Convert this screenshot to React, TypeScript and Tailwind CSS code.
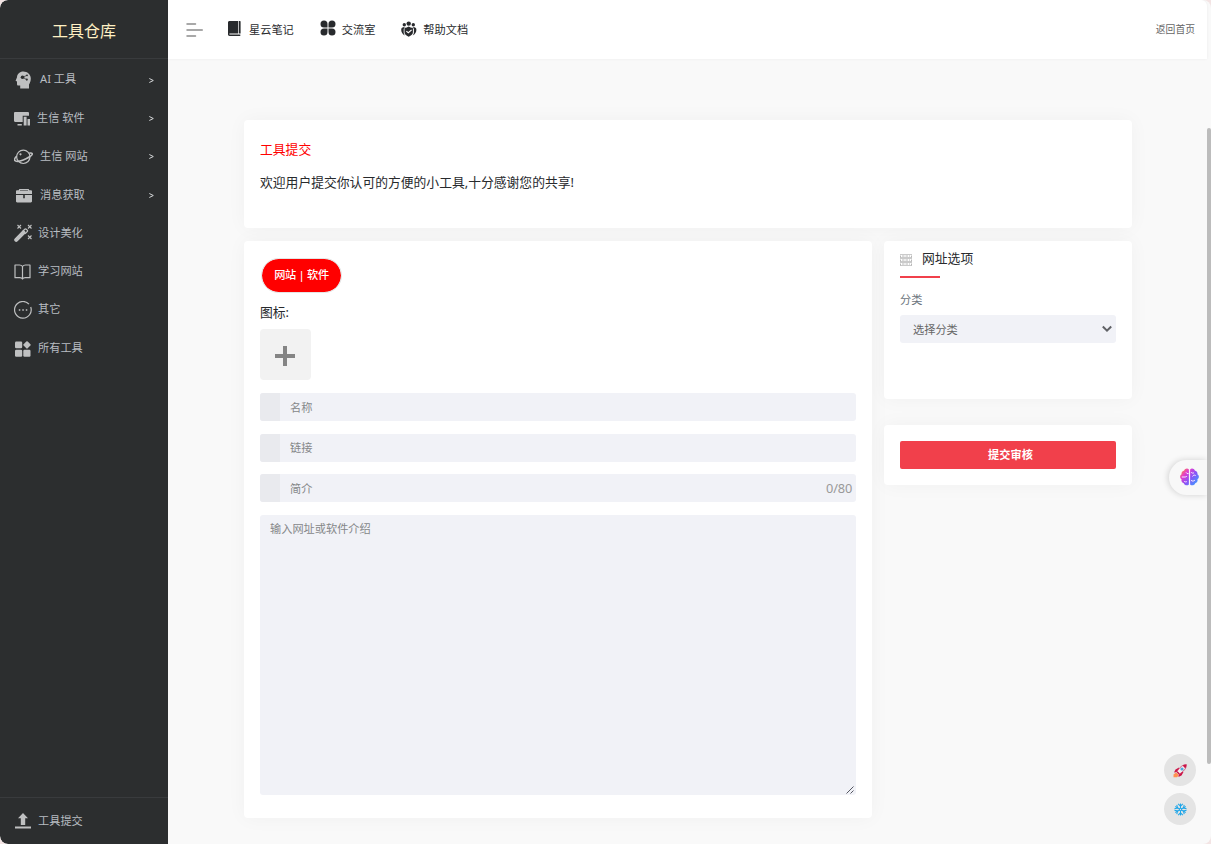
import React from 'react';

type IconProps = { className?: string };

const HeadIcon = ({ className }: IconProps) => (
  <svg viewBox="0 0 17 18" className={className} fill="currentColor">
    <path d="M8.3.5C4.8.5 2.1 3 2 6.200L.7 9.400c-.2.500 0 .8.500.900H2v3c0 .8.500 1.300 1.300 1.300h1.900v2.900h8.800v-4c1.100-1.600 1.800-3.600 1.800-6C15.800 3.300 12.200.500 8.300.500Z" />
    <g fill="#2c2e2f" stroke="#2c2e2f" strokeWidth=".7">
      <circle cx="7.500" cy="6.300" r="1.800" stroke="none" />
      <circle cx="12" cy="4.300" r=".9" stroke="none" />
      <circle cx="11.800" cy="8.600" r="1.100" stroke="none" />
      <path d="m7.500 6.300 4.500-2m-4.500 2 4.300 2.300" />
    </g>
  </svg>
);

const DevicesIcon = ({ className }: IconProps) => (
  <svg viewBox="0 0 17 14" className={className} fill="currentColor">
    <path d="M1.200 0h12.600c.7 0 1.200.500 1.200 1.200V3.700H8.700v6.300H1.200C.500 10 0 9.500 0 8.800V1.200C0 .500.500 0 1.200 0Z" />
    <path d="M3.500 12h4.300v1.500H3.500zM9.700 4.700h2.900v8.800H9.700zM13.500 7H16v6.500h-2.500z" />
  </svg>
);

const PlanetIcon = ({ className }: IconProps) => (
  <svg viewBox="0 0 19 16" className={className} fill="none" stroke="currentColor" strokeWidth="1.2">
    <circle cx="9.300" cy="7.800" r="6.700" />
    <path d="M2.800 7C.800 9 .100 10.600.800 11.500c1.200 1.500 6.200.500 11.200-1.800 4-1.900 6.700-4 6.200-5.100-.300-.600-1.300-.800-2.900-.500" strokeWidth="1.600" />
    <circle cx="6.500" cy="5.300" r=".500" fill="currentColor" />
  </svg>
);

const CaseIcon = ({ className }: IconProps) => (
  <svg viewBox="0 0 16 14" className={className} fill="currentColor">
    <path fillRule="evenodd" d="M2.800 1.300C2.800.500 3.300 0 4 0h8c.7 0 1.200.500 1.200 1.300h1.600c.7 0 1.200.500 1.200 1.200V5H0V2.500c0-.7.500-1.200 1.200-1.200h1.600Zm1.200-.3v.500h8V1H4Z" />
    <path d="M0 6h7.200v3.200h1.600V6H16v6.300c0 .700-.500 1.200-1.200 1.200H1.200c-.700 0-1.200-.500-1.200-1.200V6Z" />
  </svg>
);

const WandIcon = ({ className }: IconProps) => (
  <svg viewBox="0 0 19 18" className={className} fill="none" stroke="currentColor">
    <path d="M2.200 15.800 9.500 8.500" strokeWidth="4" strokeLinecap="round" />
    <path d="m8.500 7.500 2.300-2.300c.500-.500 1-.500 1.500 0l.900.900c.500.500.500 1 0 1.500L11 9.800" strokeWidth="1.300" />
    <path d="m3.500 1 3.500 3.500m0-3.500-3.500 3.500m10.500-3.500 3.500 3.500m0-3.500L14 4.500m0 7 3.500 3.500m0-3.500-3.500 3.500" strokeWidth="1.1" />
  </svg>
);

const BookOpenIcon = ({ className }: IconProps) => (
  <svg viewBox="0 0 17 16" className={className} fill="none" stroke="currentColor" strokeWidth="1.200" strokeLinejoin="round">
    <path d="M8.500 2.500C7.800 1.500 6.800 1 5.500 1H1v12.700h4.800c1.300 0 2.200.300 2.700 1.300.500-1 1.400-1.300 2.700-1.300H16V1h-4.500c-1.300 0-2.300.500-3 1.500V15" />
  </svg>
);

const MoreIcon = ({ className }: IconProps) => (
  <svg viewBox="0 0 18 18" className={className} fill="none" stroke="currentColor">
    <path d="M15 3.200A8.300 8.300 0 1 0 16.700 6" strokeWidth="1.200" />
    <path d="M4.800 9h1.500m2 0h1.500m2 0h1.500" strokeWidth="1.600" />
  </svg>
);

const TilesIcon = ({ className }: IconProps) => (
  <svg viewBox="0 0 16 16" className={className} fill="currentColor">
    <rect x="0" y=".5" width="7.200" height="6.800" rx="1.200" />
    <rect x="9.100" y="1" width="5.800" height="5.800" rx="1" transform="rotate(45 12 3.900)" />
    <rect x="0" y="8.700" width="7.200" height="7" rx="1.200" />
    <rect x="8.300" y="8.700" width="7.200" height="7" rx="1.200" />
  </svg>
);

const UploadIcon = ({ className }: IconProps) => (
  <svg viewBox="0 0 16 16" className={className} fill="currentColor">
    <path d="M8 0 3 5.200h2.800V12h4.400V5.200H13z" />
    <path d="M0 13.500h16v2H0z" />
  </svg>
);

const NotebookIcon = ({ className }: IconProps) => (
  <svg viewBox="0 0 13 15" className={className}>
    <path d="M1.500 0H10v12.400H1.400v1h10.900V15H1.600C.600 15 0 14.300 0 13.300V1.500C0 .600.600 0 1.500 0Zm9.200 0H12c.300 0 .600.300.600.600v11.800h-1.900z" fill="#282a2d" />
  </svg>
);

const CloverIcon = ({ className }: IconProps) => (
  <svg viewBox="0 0 16 16" className={className} fill="currentColor">
    <path d="M4 .5a3.500 3.500 0 0 1 3.500 3.500v3.500H4a3.500 3.500 0 0 1 0-7ZM12 .5a3.500 3.500 0 0 1 0 7H8.500V4A3.500 3.500 0 0 1 12 .5ZM4 8.500h3.500V12A3.500 3.500 0 1 1 4 8.500ZM8.500 8.500H12A3.500 3.500 0 1 1 8.500 12z" />
  </svg>
);

const HelpersIcon = ({ className }: IconProps) => (
  <svg viewBox="0 0 16 16" className={className} fill="currentColor">
    <circle cx="7.700" cy="2.600" r="2.200" />
    <circle cx="3.300" cy="3.800" r="1.700" />
    <circle cx="12.300" cy="3.800" r="1.700" />
    <path d="M3.600 6 2.700 8.200v3.300c0 1 .400 2 1.200 2.900C1.500 13.200.200 11.200.200 8.700 0.200 6.800 1.300 6 3.600 6ZM12 6l.9 2.200v3.300c0 1-.4 2-1.200 2.900 2.400-1.200 3.700-3.200 3.700-5.700C15.400 6.800 14.300 6 12 6Z" />
    <path fillRule="evenodd" d="M7.700 5.500c1.300.9 2.600 1.200 4.200 1.200v4.600c0 2.100-1.600 3.400-4.200 4.400-2.600-1-4.200-2.300-4.200-4.400V6.700c1.600 0 2.900-.3 4.200-1.200ZM5.700 9.700l-.7.800 2.300 2.100L11 9.300l-.8-.8-2.900 2.600z" />
  </svg>
);

const ServerIcon = ({ className }: IconProps) => (
  <svg viewBox="0 0 12 12" className={className} fill="none" stroke="currentColor" strokeWidth="1">
    <path d="M.5 1.500v2m11-2v2m-11 2v2m11-2v2m-11 2v2m11-2v2" />
    <path d="M0 .5h12M0 3.500h12M0 4.500h12M0 7.500h12M0 8.500h12M0 11.500h12" strokeOpacity=".75" />
    <path d="M2 2h2.500m1 0H8m1 0h1M2 6h2.500m1 0H8m1 0h1M2 10h2.500m1 0H8m1 0h1" />
  </svg>
);

const BrainIcon = ({ className }: IconProps) => (
  <svg viewBox="0 0 19 18" className={className}>
    <defs>
      <linearGradient id="brain" x1="2" y1="2" x2="17" y2="16" gradientUnits="userSpaceOnUse">
        <stop offset="0" stopColor="#ff7a59" />
        <stop offset=".25" stopColor="#e13bd0" />
        <stop offset=".58" stopColor="#8955f7" />
        <stop offset="1" stopColor="#3e9bff" />
      </linearGradient>
    </defs>
    <path fill="url(#brain)" d="M8.900 1.600v14.800C7.500 18 4.500 17.500 3.800 15.200 1.700 14.700 1 12.800 1.600 11.300-.4 9.900-.3 7.300 1.600 6.300 1.200 4.400 2.300 2.900 4 2.700 4.900.3 7.700-.2 8.900 1.600Zm1.200 0C11.300-.2 14.100.3 15 2.700c1.700.2 2.800 1.700 2.400 3.600 1.900 1 2 3.600 0 5 .6 1.500-.1 3.400-2.200 3.900-.7 2.300-3.700 2.800-5.100 1.200z" />
    <path d="M8.500 5.500H7L6 4.300M1.800 9h4l1-1M4 13c.6 1 2 1.200 2.900.5M11 4c.8 1.300 2 1.300 3 .8m-1.500 3.700c.7-1.500 2-1.700 3.200-1M11 12.300c1.300 1.200 3 1 4-.3" stroke="#f7eaff" strokeWidth="1" fill="none" />
  </svg>
);

const RocketIcon = ({ className }: IconProps) => (
  <svg viewBox="0 0 14 14" className={className}>
    <path d="M3 8.500.500 10.500v2.800L4 13.300 6 11z" fill="#ff9152" />
    <path d="m6 3.500-3.500 2L1 8.500 4 8l2 2-.600 3L8.500 11.500l2-3.500z" fill="#cc1649" />
    <path d="M13.400.600C9.500.600 6.500 3.500 3.800 7.800l2.400 2.400C10.500 7.500 13.400 4.500 13.400.600Z" fill="#f3eef1" stroke="#c93760" strokeWidth=".7" />
    <path d="M13.400.600c-1.500 0-2.700.300-3.900 1l2.900 2.900c.7-1.200 1-2.400 1-3.900Z" fill="#cc1649" />
    <circle cx="9" cy="5" r="1.600" fill="#4da9dc" />
    <path d="m4.600 7.200 2.200 2.200-1 1-2.200-2.200z" fill="#cc1649" />
  </svg>
);

const SnowIcon = ({ className }: IconProps) => (
  <svg viewBox="0 0 14 14" className={className} fill="none" stroke="#20a6e8" strokeWidth="1.100">
    <path d="M7 .500v13M1.400 3.750l11.200 6.500m0-6.500-11.200 6.500" />
    <path d="m4.500.900 2.500 2.500L9.500.900M4.500 13.100 7 10.600l2.500 2.500M.500 6.300l3.400-.9-.9-3.400M11 12l-.9-3.400 3.400-.9M.500 7.700l3.400.9L3 12M11 2l-.9 3.400 3.400.9" />
    <circle cx="7" cy="7" r="1.300" fill="#e4e4e4" />
  </svg>
);

const menu = [
  { label: 'AI 工具', Icon: HeadIcon, icon: 'mt-px h-[18px] w-[17px]', text: 'mt-px', pad: 'pl-[15px]', gap: 'gap-2', more: true },
  { label: '生信 软件', Icon: DevicesIcon, icon: 'mt-[3px] h-[14px] w-[17px]', text: 'mt-[2px]', pad: 'pl-[14px]', gap: 'gap-[6px]', more: true },
  { label: '生信 网站', Icon: PlanetIcon, icon: 'mt-[2px] h-4 w-[19px]', text: 'mt-px', pad: 'pl-[14px]', gap: 'gap-[7px]', more: true },
  { label: '消息获取', Icon: CaseIcon, icon: 'mt-[3px] h-[14px] w-4', text: 'mt-[2px]', pad: 'pl-[16px]', gap: 'gap-2', more: true },
  { label: '设计美化', Icon: WandIcon, icon: 'mt-px h-[18px] w-[19px]', text: 'mt-[2px]', pad: 'pl-[14px]', gap: 'gap-[5px]', more: false },
  { label: '学习网站', Icon: BookOpenIcon, icon: 'mt-[2px] h-4 w-[17px]', text: 'mt-px', pad: 'pl-[14px]', gap: 'gap-[7px]', more: false },
  { label: '其它', Icon: MoreIcon, icon: 'mt-px h-[18px] w-[18px]', text: '', pad: 'pl-[14px]', gap: 'gap-[6px]', more: false },
  { label: '所有工具', Icon: TilesIcon, icon: 'mt-[3px] h-4 w-4', text: 'mt-px', pad: 'pl-[15px]', gap: 'gap-[7px]', more: false },
];

function Sidebar() {
  return (
    <aside className="flex w-[168px] shrink-0 flex-col rounded-l-lg bg-[#2c2e2f] text-[11.2px] text-[#b8bdc2]">
      <div className="flex h-[59px] items-center justify-center border-b border-[#393b3d] pt-[3px] text-base text-[#fff0c4]">工具仓库</div>
      <nav className="flex-1 pt-[1px]">
        {menu.map(({ label, Icon, icon, text, pad, gap, more }) => (
          <a key={label} className={`flex h-[38.4px] items-center ${pad} ${gap}`}>
            <Icon className={`shrink-0 text-[#bfc0c1] ${icon}`} />
            <span className={`whitespace-nowrap ${text}`}>{label}</span>
            {more && (
              <svg viewBox="0 0 5 5" className="ml-auto mr-[14px] mt-[2px] h-[5px] w-[5px]" fill="none" stroke="#d5d7d9" strokeWidth="1">
                <path d="M.3.5 4.300 2.500.3 4.500" />
              </svg>
            )}
          </a>
        ))}
      </nav>
      <a className="flex h-[47px] items-center gap-[7px] border-t border-[#393b3d] pl-[15px]">
        <UploadIcon className="h-4 w-4 text-[#bfc0c1]" />
        <span className="mt-px">工具提交</span>
      </a>
    </aside>
  );
}

function Header() {
  return (
    <header className="mr-1 flex h-[59px] shrink-0 items-center rounded-tr-md bg-white pl-[18px] pr-[12px] text-[11.2px] text-[#282a2d] shadow-[0_0_3px_rgba(0,0,0,0.06)]">
      <svg viewBox="0 0 17 16" className="h-4 w-[17px]" stroke="#8c8c8c" strokeWidth="1.500">
        <path d="M1 2h8.500M1 8h15.300M1 14h8.500" strokeLinecap="round" />
      </svg>
      <a className="ml-[25px] flex items-center gap-2">
        <NotebookIcon className="-mt-[2px] h-[15px] w-[13px]" />
        <span className="mt-[2px]">星云笔记</span>
      </a>
      <a className="ml-[26px] flex items-center gap-[6px]">
        <CloverIcon className="-mt-[2px] h-4 w-4" />
        <span className="mt-[2px]">交流室</span>
      </a>
      <a className="ml-[26px] flex items-center gap-[6px]">
        <HelpersIcon className="-mt-px h-4 w-4" />
        <span className="mt-[2px]">帮助文档</span>
      </a>
      <a className="ml-auto mt-[2px] text-[9.800px] text-[#666]">返回首页</a>
    </header>
  );
}

function Field({ label, counter }: { label: string; counter?: string }) {
  return (
    <div className="flex h-7 items-center overflow-hidden rounded-[3px] bg-[#f1f2f7] text-[11.2px] text-[#858789]">
      <span className="h-full w-5 bg-[#e9eaee]" />
      <span className="ml-[10px] mt-[2px]">{label}</span>
      {counter && <span className="ml-auto mr-1 mt-px text-[12.800px] tracking-[-0.2px] text-[#999]">{counter}</span>}
    </div>
  );
}

const card = 'rounded bg-white shadow-[0_0_20px_rgba(0,0,0,0.04)]';

export default function App() {
  return (
    <div className="h-[844px] w-[1211px] overflow-hidden bg-[#f3e4e4] font-['Noto_Sans','Noto_Sans_CJK_SC',sans-serif]">
      <div className="relative flex h-full overflow-hidden rounded-lg bg-[#f9f9f9]">
        <Sidebar />
        <div className="flex flex-1 flex-col">
          <Header />
          <main className="ml-[76px] mt-[61px] w-[888px]">
            <section className={`h-[108px] px-4 pt-[19px] text-[12.800px] leading-5 text-[#282a2d] ${card}`}>
              <h1 className="text-[#f00]">工具提交</h1>
              <p className="mt-[13px]">欢迎用户提交你认可的方便的小工具,十分感谢您的共享!</p>
            </section>
            <div className="mt-[13px] flex items-start gap-3">
              <section className={`h-[577px] w-[628px] px-4 pt-4 ${card}`}>
                <button className="ml-px mt-px flex h-[35px] w-[81px] items-center justify-center whitespace-pre rounded-full border-[1.500px] border-[#e4e4e4] bg-[#f00] bg-clip-padding text-[11.2px] font-medium tracking-[-0.3px] text-white">
                  网站 | 软件
                </button>
                <div className="mt-[9px] text-[12.800px] leading-5 text-[#282a2d]">图标:</div>
                <div className="mt-[7px] flex h-[51px] w-[51px] items-center justify-center rounded bg-[#f2f2f2]">
                  <svg viewBox="0 0 20 20" className="mt-[3px] mr-px h-5 w-5" stroke="#858585" strokeWidth="4">
                    <path d="M10 0v20M0 10h20" />
                  </svg>
                </div>
                <div className="mt-[13px] flex flex-col gap-[12.600px]">
                  <Field label="名称" />
                  <Field label="链接" />
                  <Field label="简介" counter="0/80" />
                  <div className="relative h-[280px] rounded-[3px] bg-[#f1f2f7] px-[10px] pt-[4px] text-[11.2px] leading-5 text-[#858789]">
                    输入网址或软件介绍
                    <svg viewBox="0 0 8 8" className="absolute bottom-px right-[2px] h-2 w-2" stroke="#555762" strokeWidth="1">
                      <path d="M.5 7.500l7-7M4.500 7.500l3-3" />
                    </svg>
                  </div>
                </div>
              </section>
              <aside className="w-[248px]">
                <section className={`h-[158px] px-4 pt-[7px] ${card}`}>
                  <h2 className="flex h-5 items-center text-[12.800px] leading-5 text-[#282a2d]">
                    <ServerIcon className="mr-[10px] mt-[3px] h-3 w-3 text-[#b8b8b8]" />
                    <span className="-mt-px">网址选项</span>
                  </h2>
                  <div className="mt-[8px] h-[2px] w-10 bg-[#f1404b]" />
                  <div className="mt-[12px] text-[11.2px] leading-5 text-[#6c757d]">分类</div>
                  <div className="mt-[5px] flex h-7 items-center rounded-[3px] bg-[#f1f2f7] pl-[13px] pr-1 text-[11.2px] text-[#666]">
                    <span className="mt-[2px]">选择分类</span>
                    <svg viewBox="0 0 10 8" className="ml-auto h-2 w-[10px]" fill="none" stroke="#606266" strokeWidth="2">
                      <path d="M.8 1.500 5 5.700 9.200 1.500" />
                    </svg>
                  </div>
                </section>
                <section className={`mt-[26px] h-[60px] p-4 ${card}`}>
                  <button className="flex h-7 w-full items-center justify-center rounded-[2px] bg-[#f1404b] pl-[5px] text-[11.2px] font-bold text-white">提交审核</button>
                </section>
              </aside>
            </div>
          </main>
        </div>
        <div className="absolute right-0 top-[128px] h-[636px] w-1 rounded-full bg-[#bcbcbc]" />
        <div className="absolute right-1 top-[460px] flex h-[35px] w-[38px] items-center rounded-l-full bg-[#f8f8f8] pl-[11px] shadow-[-1px_0_6px_rgba(0,0,0,0.16)] [clip-path:inset(-10px_0_-10px_-10px)]">
          <BrainIcon className="-mt-px h-[18px] w-[19px]" />
        </div>
        <div className="absolute right-[15px] top-[754px] flex flex-col gap-[7px]">
          <button className="flex h-8 w-8 items-center justify-center rounded-full bg-[#e4e4e4]">
            <RocketIcon className="mt-px h-[14px] w-[14px]" />
          </button>
          <button className="flex h-8 w-8 items-center justify-center rounded-full bg-[#e4e4e4]">
            <SnowIcon className="mt-px h-[13px] w-[13px]" />
          </button>
        </div>
      </div>
    </div>
  );
}
